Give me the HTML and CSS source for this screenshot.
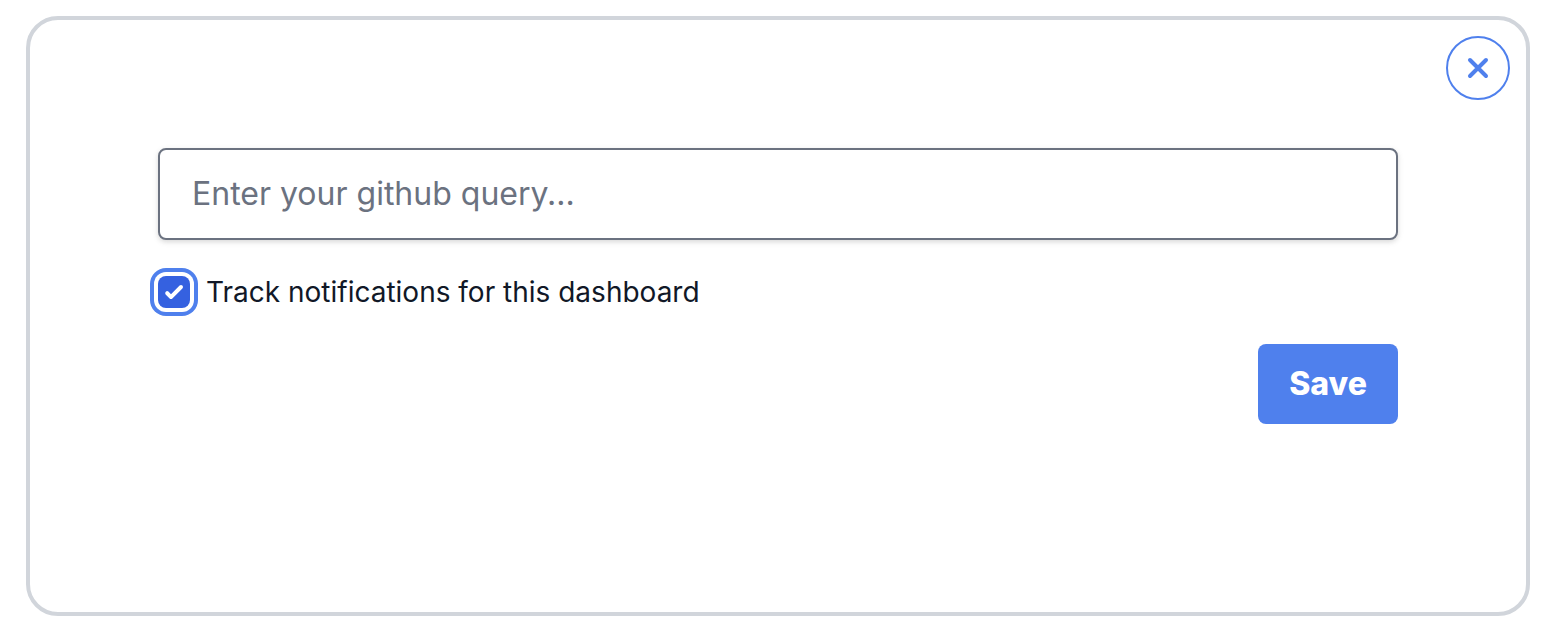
FILE: index.html
```html
<!DOCTYPE html>
<html lang="en">
<head>
<meta charset="utf-8">
<title>Dashboard query</title>
<link rel="stylesheet" href="styles.css">
</head>
<body>
<main class="card">
  <button class="close" type="button" aria-label="Close">
    <svg class="close-icon" viewBox="0 0 24 24" aria-hidden="true"><path d="M4 4 20 20M20 4 4 20"/></svg>
  </button>
  <form class="form">
    <input class="query" type="text" placeholder="Enter your github query..." aria-label="GitHub query">
    <div class="track">
      <input class="checkbox" type="checkbox" id="track" checked>
      <label class="track-label" for="track">Track notifications for this dashboard</label>
    </div>
    <button class="save" type="button">Save</button>
  </form>
</main>
</body>
</html>
```
FILE: styles.css
```css
* {
  box-sizing: border-box;
}

body {
  margin: 0;
  padding: 16px 28px 18px 26px;
  min-height: 100vh;
  display: flex;
  background: #fff;
  color: #111827;
  font-family: Inter, "Liberation Sans", sans-serif;
}

.card {
  flex: 1;
  display: flex;
  flex-direction: column;
  padding: 16px;
  border: 4px solid #d1d5db;
  border-radius: 32px;
}

.close {
  align-self: flex-end;
  display: flex;
  align-items: center;
  justify-content: center;
  width: 64px;
  height: 64px;
  padding: 0;
  border: 2px solid #4f80ed;
  border-radius: 50%;
  background: #fff;
  color: #4f80ed;
}

.close-icon {
  width: 24px;
  height: 24px;
  fill: none;
  stroke: currentColor;
  stroke-width: 4;
  stroke-linecap: round;
}

.form {
  display: flex;
  flex-direction: column;
  padding: 48px 112px;
}

.query {
  width: 100%;
  height: 92px;
  padding: 0 32px 2px;
  border: 2px solid #6b7280;
  border-radius: 8px;
  background: #fff;
  box-shadow: 0 2px 6px rgba(0, 0, 0, 0.1), 0 2px 4px rgba(0, 0, 0, 0.06);
  color: inherit;
  font-family: inherit;
  font-size: 32px;
}

.query::placeholder {
  color: #6b7280;
  opacity: 1;
}

.track {
  display: flex;
  align-items: center;
  gap: 16px;
  margin: 32px 0;
}

.checkbox {
  appearance: none;
  display: grid;
  place-items: center;
  width: 32px;
  height: 32px;
  margin: 4px 0;
  border-radius: 8px;
  background: #3561e0;
  box-shadow: 0 0 0 4px #fff, 0 0 0 8px #4f80ed;
}

.checkbox::before {
  content: "";
  width: 32px;
  height: 32px;
  background: #fff;
  clip-path: path("M24.4 9.6a2 2 0 0 1 0 2.8l-10 10a2 2 0 0 1-2.8 0l-4-4a2 2 0 0 1 2.8-2.8l2.6 2.6 8.6-8.6a2 2 0 0 1 2.8 0z");
}

.track-label {
  font-size: 28px;
  line-height: 40px;
}

.save {
  align-self: flex-end;
  min-width: 140px;
  height: 80px;
  padding: 0 24px 2px;
  border: 0;
  border-radius: 8px;
  background: #4f80ed;
  color: #fff;
  font-family: inherit;
  font-size: 32px;
  font-weight: 800;
}
```
